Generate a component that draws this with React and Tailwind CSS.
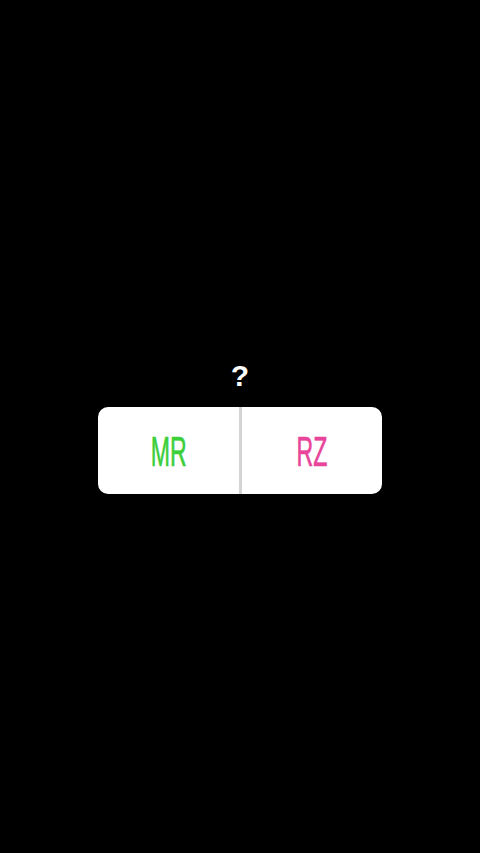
export default function App() {
  return (
    <div className="w-[480px] h-[853px] bg-black flex flex-col items-center pt-[360px]">
      <div className="text-white font-bold text-[30px] leading-[32px] font-['Liberation_Sans',sans-serif]">?</div>
      <div className="mt-[15px] w-[284px] h-[87px] bg-white rounded-[10px] flex overflow-hidden">
        <div className="flex-1 flex items-center justify-center">
          <span className="inline-block text-[42px] leading-none text-[#3ccf3c] [-webkit-text-stroke:0.7px_#3ccf3c] font-['Liberation_Sans',sans-serif] scale-x-[0.55] mt-[3px]">MR</span>
        </div>
        <div className="w-[3px] bg-[#d4d4d4]" />
        <div className="flex-1 flex items-center justify-center">
          <span className="inline-block text-[42px] leading-none text-[#e8449a] [-webkit-text-stroke:0.7px_#e8449a] font-['Liberation_Sans',sans-serif] scale-x-[0.55] mt-[3px]">RZ</span>
        </div>
      </div>
    </div>
  );
}
